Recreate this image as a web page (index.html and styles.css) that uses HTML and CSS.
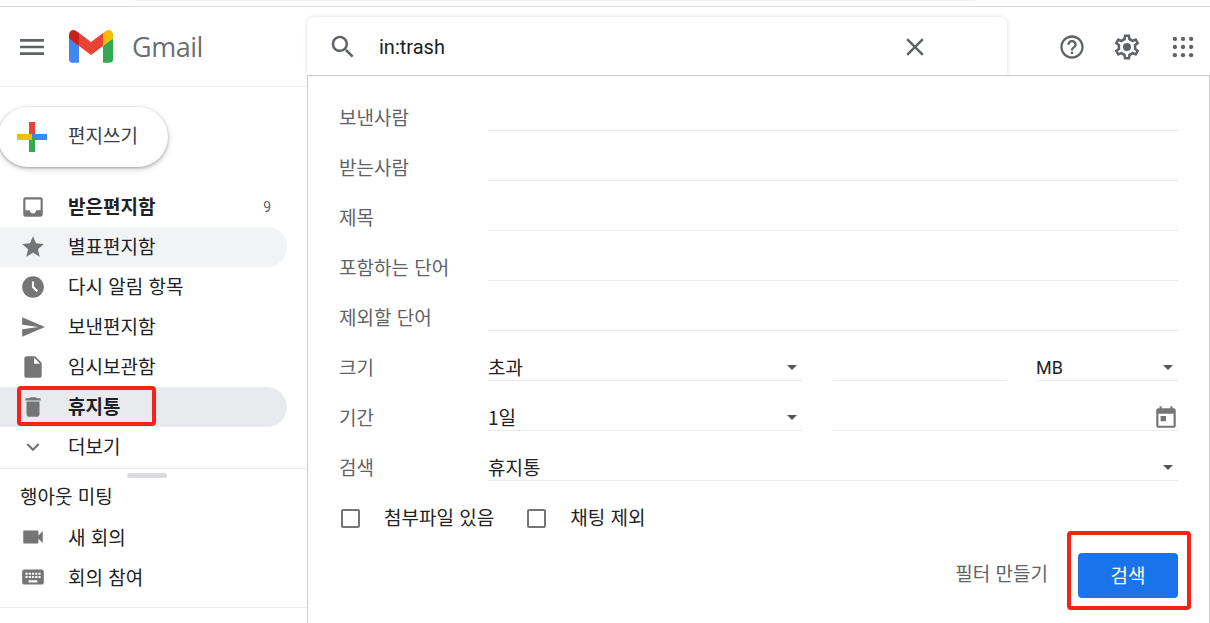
FILE: index.html
```html
<!DOCTYPE html>
<html lang="ko">
  <head>
    <meta charset="UTF-8" />
    <title>Gmail</title>
    <link rel="stylesheet" href="styles.css">
  </head>
  <body>
    <div class="top-strip"><div class="top-strip-tab"></div></div>

    <header class="header">
      <div class="brand">
        <svg class="menu-icon" viewBox="0 0 24 24"><path d="M3 18h18v-2H3v2zm0-5h18v-2H3v2zm0-7v2h18V6H3z"/></svg>
        <svg class="logo" viewBox="0 0 256 193" preserveAspectRatio="none">
          <path fill="#4285F4" d="M58.182 192.05V93.14L27.507 65.077 0 49.504v125.091c0 9.658 7.825 17.455 17.455 17.455h40.727Z"/>
          <path fill="#34A853" d="M197.818 192.05h40.727c9.659 0 17.455-7.826 17.455-17.455V49.505l-31.156 17.837-27.026 25.798v98.91Z"/>
          <path fill="#EA4335" d="m58.182 93.14-4.174-38.647 4.174-36.989L128 69.868l69.818-52.364 4.669 34.992-4.669 40.644L128 145.504z"/>
          <path fill="#FBBC04" d="M197.818 17.504V93.14L256 49.504V26.231c0-21.585-24.64-33.89-41.89-20.945l-16.292 12.218Z"/>
          <path fill="#C5221F" d="m0 49.504 26.759 20.07L58.182 93.14V17.504L41.89 5.286C24.61-7.66 0 4.646 0 26.23v23.273Z"/>
        </svg>
        <span class="logo-text">Gmail</span>
      </div>
      <div class="search-box">
        <svg class="search-icon" viewBox="0 0 24 24"><path d="M15.5 14h-.79l-.28-.27C15.41 12.59 16 11.11 16 9.5 16 5.91 13.09 3 9.5 3S3 5.91 3 9.5 5.91 16 9.5 16c1.61 0 3.09-.59 4.23-1.57l.27.28v.79l5 4.99L20.49 19l-4.99-5zm-6 0C7.01 14 5 11.99 5 9.5S7.01 5 9.5 5 14 7.01 14 9.5 11.99 14 9.5 14z"/></svg>
        <span class="search-text">in:trash</span>
        <svg class="close-icon" viewBox="0 0 24 24"><path d="M19 6.41L17.59 5 12 10.59 6.41 5 5 6.41 10.59 12 5 17.59 6.41 19 12 13.41 17.59 19 19 17.59 13.41 12z"/></svg>
      </div>
      <div class="header-icons">
        <svg class="header-icon" viewBox="0 0 24 24"><path d="M11 18h2v-2h-2v2zm1-16C6.48 2 2 6.48 2 12s4.48 10 10 10 10-4.48 10-10S17.52 2 12 2zm0 18c-4.41 0-8-3.59-8-8s3.59-8 8-8 8 3.59 8 8-3.59 8-8 8zm0-14c-2.21 0-4 1.79-4 4h2c0-1.1.9-2 2-2s2 .9 2 2c0 2-3 1.75-3 5h2c0-2.25 3-2.5 3-5 0-2.21-1.79-4-4-4z"/></svg>
        <svg class="header-icon gear" viewBox="0 0 24 24"><path d="M19.43 12.98c.04-.32.07-.64.07-.98 0-.34-.03-.66-.07-.98l2.11-1.65c.19-.15.24-.42.12-.64l-2-3.46c-.09-.16-.26-.25-.44-.25-.06 0-.12.01-.17.03l-2.49 1c-.52-.4-1.08-.73-1.69-.98l-.38-2.65C14.46 2.18 14.25 2 14 2h-4c-.25 0-.46.18-.49.42l-.38 2.65c-.61.25-1.17.59-1.69.98l-2.49-1c-.06-.02-.12-.03-.18-.03-.17 0-.34.09-.43.25l-2 3.46c-.13.22-.07.49.12.64l2.11 1.65c-.04.32-.07.65-.07.98 0 .33.03.66.07.98l-2.11 1.65c-.19.15-.24.42-.12.64l2 3.46c.09.16.26.25.44.25.06 0 .12-.01.17-.03l2.49-1c.52.4 1.08.73 1.69.98l.38 2.65c.03.24.24.42.49.42h4c.25 0 .46-.18.49-.42l.38-2.65c.61-.25 1.17-.59 1.69-.98l2.49 1c.06.02.12.03.18.03.17 0 .34-.09.43-.25l2-3.46c.12-.22.07-.49-.12-.64l-2.11-1.65zm-1.98-1.71c.04.31.05.52.05.73 0 .21-.02.43-.05.73l-.14 1.13.89.7 1.08.84-.7 1.21-1.27-.51-1.04-.42-.9.68c-.43.32-.84.56-1.25.73l-1.06.43-.16 1.13-.2 1.35h-1.4l-.19-1.35-.16-1.13-1.06-.43c-.43-.18-.83-.41-1.23-.71l-.91-.7-1.06.43-1.27.51-.7-1.21 1.08-.84.89-.7-.14-1.13c-.03-.31-.05-.54-.05-.74s.02-.43.05-.73l.14-1.13-.89-.7-1.08-.84.7-1.21 1.27.51 1.04.42.9-.68c.43-.32.84-.56 1.25-.73l1.06-.43.16-1.13.2-1.35h1.39l.19 1.35.16 1.13 1.06.43c.43.18.83.41 1.23.71l.91.7 1.06-.43 1.27-.51.7 1.21-1.07.85-.89.7.14 1.13z"/><circle cx="12" cy="12" r="3.2"/></svg>
        <svg class="header-icon apps" viewBox="0 0 24 24">
          <circle cx="4.5" cy="4.5" r="2"/><circle cx="12" cy="4.5" r="2"/><circle cx="19.5" cy="4.5" r="2"/>
          <circle cx="4.5" cy="12" r="2"/><circle cx="12" cy="12" r="2"/><circle cx="19.5" cy="12" r="2"/>
          <circle cx="4.5" cy="19.5" r="2"/><circle cx="12" cy="19.5" r="2"/><circle cx="19.5" cy="19.5" r="2"/>
        </svg>
      </div>
    </header>

    <aside class="sidebar">
      <button class="compose">
        <svg class="compose-plus" viewBox="0 0 30 30">
          <rect x="12" y="0" width="6" height="15" fill="#ea4335"/>
          <rect x="15" y="12" width="15" height="6" fill="#4285f4"/>
          <rect x="12" y="15" width="6" height="15" fill="#34a853"/>
          <rect x="0" y="12" width="15" height="6" fill="#fbbc04"/>
        </svg>
        <span class="compose-text">편지쓰기</span>
      </button>

      <nav class="nav">
        <div class="nav-row bold">
          <svg class="nav-icon" viewBox="0 0 24 24"><path d="M19 3H4.99c-1.11 0-1.98.89-1.98 2L3 19c0 1.1.88 2 1.99 2H19c1.1 0 2-.9 2-2V5c0-1.11-.9-2-2-2zm0 12h-4c0 1.66-1.35 3-3 3s-3-1.34-3-3H4.99V5H19v10z"/></svg>
          <span class="nav-text">받은편지함</span><span class="nav-count">9</span>
        </div>
        <div class="nav-row hovered">
          <svg class="nav-icon" viewBox="0 0 24 24"><path d="M12 17.27L18.18 21l-1.64-7.03L22 9.24l-7.19-.61L12 2 9.19 8.63 2 9.24l5.46 4.73L5.82 21z"/></svg>
          <span class="nav-text">별표편지함</span>
        </div>
        <div class="nav-row">
          <svg class="nav-icon" viewBox="0 0 24 24"><path fill-rule="evenodd" d="M11.99 2C6.47 2 2 6.48 2 12s4.47 10 9.99 10C17.52 22 22 17.52 22 12S17.52 2 11.99 2zM15.29 16.71L11 12.41V7h2v4.59l3.71 3.71-1.42 1.41z"/></svg>
          <span class="nav-text">다시 알림 항목</span>
        </div>
        <div class="nav-row">
          <svg class="nav-icon" viewBox="0 0 24 24"><path d="M2.01 21L23 12 2.01 3 2 10l15 2-15 2z"/></svg>
          <span class="nav-text">보낸편지함</span>
        </div>
        <div class="nav-row">
          <svg class="nav-icon" viewBox="0 0 24 24"><path d="M6 2c-1.1 0-1.99.9-1.99 2L4 20c0 1.1.89 2 1.99 2H18c1.1 0 2-.9 2-2V8l-6-6H6zm7 7V3.5L18.5 9H13z"/></svg>
          <span class="nav-text">임시보관함</span>
        </div>
        <div class="nav-row bold selected">
          <svg class="nav-icon" viewBox="0 0 24 24"><path d="M6 19c0 1.1.9 2 2 2h8c1.1 0 2-.9 2-2V7H6v12zM19 4h-3.5l-1-1h-5l-1 1H5v2h14V4z"/></svg>
          <span class="nav-text">휴지통</span>
        </div>
        <div class="nav-row">
          <svg class="nav-icon" viewBox="0 0 24 24"><path d="M16.59 8.59L12 13.17 7.41 8.59 6 10l6 6 6-6z"/></svg>
          <span class="nav-text">더보기</span>
        </div>
      </nav>

      <div class="meet">
        <div class="meet-handle"></div>
        <div class="meet-title">행아웃 미팅</div>
        <div class="nav-row">
          <svg class="nav-icon" viewBox="0 0 24 24"><path d="M17 10.5V7c0-.55-.45-1-1-1H4c-.55 0-1 .45-1 1v10c0 .55.45 1 1 1h12c.55 0 1-.45 1-1v-3.5l4 4v-11l-4 4z"/></svg>
          <span class="nav-text">새 회의</span>
        </div>
        <div class="nav-row">
          <svg class="nav-icon" viewBox="0 0 24 24"><path d="M20 5H4c-1.1 0-1.99.9-1.99 2L2 17c0 1.1.9 2 2 2h16c1.1 0 2-.9 2-2V7c0-1.1-.9-2-2-2zm-9 3h2v2h-2V8zm0 3h2v2h-2v-2zM8 8h2v2H8V8zm0 3h2v2H8v-2zm-1 2H5v-2h2v2zm0-3H5V8h2v2zm9 7H8v-2h8v2zm0-4h-2v-2h2v2zm0-3h-2V8h2v2zm3 3h-2v-2h2v2zm0-3h-2V8h2v2z"/></svg>
          <span class="nav-text">회의 참여</span>
        </div>
      </div>
      <div class="sidebar-end"></div>
    </aside>

    <!-- search options dropdown -->
    <section class="panel">
      <div class="form-row"><span class="form-label">보낸사람</span><div class="field"></div></div>
      <div class="form-row"><span class="form-label">받는사람</span><div class="field"></div></div>
      <div class="form-row"><span class="form-label">제목</span><div class="field"></div></div>
      <div class="form-row"><span class="form-label">포함하는 단어</span><div class="field"></div></div>
      <div class="form-row"><span class="form-label">제외할 단어</span><div class="field"></div></div>
      <div class="form-row">
        <span class="form-label">크기</span>
        <div class="field-group">
          <div class="field select w-select">초과</div>
          <div class="field w-size"></div>
          <div class="field select w-unit">MB</div>
        </div>
      </div>
      <div class="form-row">
        <span class="form-label">기간</span>
        <div class="field-group">
          <div class="field select w-select">1일</div>
          <div class="field date">
            <svg class="calendar-icon" viewBox="0 0 24 24"><path d="M19 4h-1V2h-2v2H8V2H6v2H5c-1.11 0-1.99.9-1.99 2L3 20c0 1.1.89 2 2 2h14c1.1 0 2-.9 2-2V6c0-1.1-.9-2-2-2zm0 16H5V9h14v11zM7 11h5v5H7z"/></svg>
          </div>
        </div>
      </div>
      <div class="form-row">
        <span class="form-label">검색</span>
        <div class="field select">휴지통</div>
      </div>

      <div class="checks">
        <span class="check-box"></span><span class="check-label">첨부파일 있음</span>
        <span class="check-box"></span><span class="check-label">채팅 제외</span>
      </div>

      <div class="actions">
        <span class="filter-link">필터 만들기</span>
        <button class="search-btn">검색</button>
      </div>
    </section>

    <!-- red annotations on the screenshot -->
    <div class="mark mark-trash"></div>
    <div class="mark mark-search"></div>
  </body>
</html>
```

FILE: styles.css
```css
body {
  margin: 0;
  height: 623px;
  overflow: hidden;
  position: relative;
  background-color: #fff;
  color: #202124;
  font-family: "Noto Sans CJK KR", Roboto, sans-serif;
  font-size: 19px;
}
.top-strip {
  height: 6px;
  border-bottom: 1px solid #ddd;
  padding-left: 135px;
}
.top-strip-tab {
  width: 840px;
  height: 1px;
  background-color: #f2f2f2;
}

/* header */
.header {
  display: flex;
  align-items: center;
  height: 79px;
  border-bottom: 1px solid #e8eaed;
}
.brand {
  display: flex;
  align-items: center;
  width: 307px;
  padding-left: 16px;
  box-sizing: border-box;
}
.menu-icon {
  width: 32px;
  height: 32px;
  fill: #5f6368;
}
.logo {
  width: 44px;
  height: 33px;
  margin-left: 21px;
}
.logo-text {
  margin-left: 19px;
  font-family: "Open Sans", sans-serif;
  font-size: 27px;
  color: #6b6f74;
  letter-spacing: -0.5px;
}
.search-box {
  display: flex;
  align-items: center;
  width: 700px;
  height: 58px;
  margin-top: -1px;
  padding: 2px 77px 0 21px;
  box-sizing: border-box;
  border-radius: 8px 8px 0 0;
  box-shadow: 0 0 4px rgba(0, 0, 0, 0.15);
  background-color: #fff;
}
.search-icon {
  width: 30px;
  height: 30px;
  fill: #5f6368;
}
.search-text {
  flex: 1;
  margin-left: 21px;
  font-family: Roboto, sans-serif;
  font-size: 20px;
}
.close-icon {
  width: 30px;
  height: 30px;
  fill: #5f6368;
}
.header-icons {
  display: flex;
  align-items: center;
  gap: 26px;
  margin-left: 51px;
}
.header-icon {
  width: 28px;
  height: 28px;
  fill: #5f6368;
}
.header-icon.gear {
  width: 30px;
  height: 30px;
}
.header-icon.apps {
  width: 26px;
  height: 26px;
  margin-left: 2px;
}

/* sidebar */
.sidebar {
  width: 307px;
}
.compose {
  display: flex;
  align-items: center;
  gap: 21px;
  width: 170px;
  height: 60px;
  margin: 20px 0 20px -2px;
  padding: 0 0 0 19px;
  border: none;
  border-radius: 30px;
  background-color: #fff;
  color: #3c4043;
  font-family: inherit;
  font-size: 19px;
  box-shadow: 0 1px 3px rgba(60, 64, 67, 0.4), 0 2px 6px rgba(60, 64, 67, 0.2);
}
.compose-plus {
  width: 30px;
  height: 30px;
}
.compose-text {
  margin-top: -5px;
}
.nav-row {
  display: flex;
  align-items: center;
  gap: 22px;
  width: 287px;
  height: 40px;
  padding: 0 16px 0 20px;
  box-sizing: border-box;
  border-radius: 0 20px 20px 0;
}
.nav-row.bold {
  font-weight: 700;
}
.nav-row.hovered {
  background-color: #f1f3f4;
}
.nav-row.selected {
  background-color: #e8eaed;
}
.nav-icon {
  width: 26px;
  height: 26px;
  flex-shrink: 0;
  fill: #757575;
}
.nav-text {
  margin-top: -2px;
}
.nav .nav-text {
  margin-top: -4px;
}
.nav-count {
  margin-left: auto;
  font-family: Roboto, sans-serif;
  font-size: 14px;
  font-weight: 400;
  color: #5f6368;
}
.meet {
  margin-top: 1px;
  border-top: 1px solid #e8eaed;
}
.meet-handle {
  width: 40px;
  height: 5px;
  margin: 4px 0 0 127px;
  border-radius: 3px;
  background-color: #dadce0;
}
.meet-title {
  height: 39px;
  line-height: 36px;
  padding-left: 20px;
}
.sidebar-end {
  margin-top: 10px;
  border-top: 1px solid #e8eaed;
}

/* search options panel */
.panel {
  position: absolute;
  left: 307px;
  top: 75px;
  width: 903px;
  height: 560px;
  padding: 5px 31px 0 31px;
  box-sizing: border-box;
  border: 1px solid #ccc;
  background-color: #fff;
  color: #222;
}
.form-row {
  display: grid;
  grid-template-columns: 149px 1fr;
  align-items: end;
  height: 50px;
}
.form-label {
  height: 28px;
  line-height: 28px;
  color: #5f6368;
}
.field {
  height: 28px;
  line-height: 28px;
  box-sizing: border-box;
  border-bottom: 1px solid #e8eaed;
}
.field-group {
  display: flex;
  gap: 30px;
}
.select {
  position: relative;
}
.select::after {
  content: "";
  position: absolute;
  right: 5px;
  top: 12px;
  border-top: 5px solid #555;
  border-left: 5px solid transparent;
  border-right: 5px solid transparent;
}
.w-select {
  width: 314px;
}
.w-size {
  width: 173px;
  margin-left: 1px;
}
.w-unit {
  width: 142px;
  line-height: 29px;
  font-family: Roboto, sans-serif;
  font-size: 18px;
}
.date {
  display: flex;
  justify-content: flex-end;
  flex: 1;
}
.calendar-icon {
  width: 26px;
  height: 26px;
  margin: 1px -1px 0 0;
  fill: #757575;
}
.checks {
  display: flex;
  align-items: center;
  height: 40px;
  margin-top: 17px;
  padding-left: 2px;
}
.check-box {
  width: 15px;
  height: 15px;
  border: 2px solid #757575;
  border-radius: 2px;
}
.check-label {
  margin: -4px 33px 0 24px;
}
.actions {
  display: flex;
  justify-content: flex-end;
  align-items: center;
  gap: 30px;
  margin-top: 15px;
}
.filter-link {
  margin-top: -6px;
  color: #5f6368;
}
.search-btn {
  width: 100px;
  height: 45px;
  padding-bottom: 4px;
  border: none;
  border-radius: 4px;
  background-color: #1a73e8;
  color: #fff;
  font-family: inherit;
  font-size: 19px;
}

/* red boxes */
.mark {
  position: absolute;
  box-sizing: border-box;
  border: 4px solid #f4231a;
  border-radius: 4px;
}
.mark-trash {
  left: 17px;
  top: 386px;
  width: 139px;
  height: 40px;
}
.mark-search {
  left: 1067px;
  top: 531px;
  width: 124px;
  height: 79px;
}
```
